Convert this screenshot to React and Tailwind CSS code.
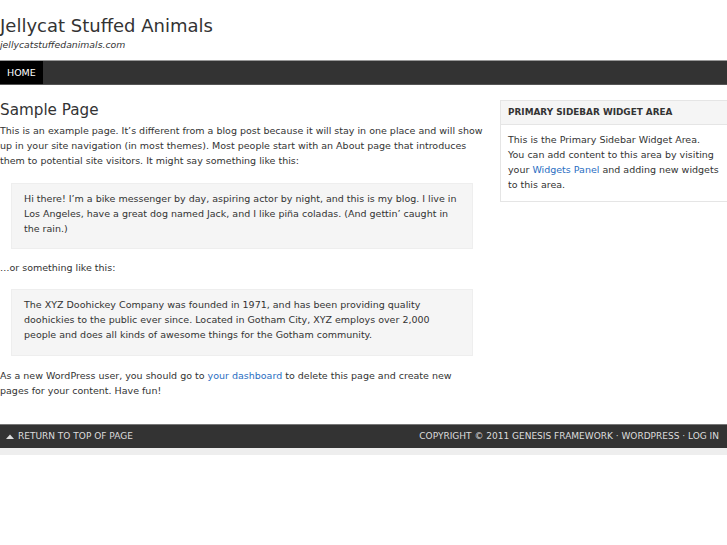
import React from "react";

const App = () => {
  return (
    <div className="min-h-[545px] bg-white text-[#333] font-['DejaVu_Sans',sans-serif]">
      <div className="w-[727px]">
        {/* Header */}
        <header className="h-[60px] pt-[14px]">
          <h1 className="text-[18px] leading-[24px] text-[#333]">Jellycat Stuffed Animals</h1>
          <p className="text-[9.3px] leading-[14px] italic text-[#333]">jellycatstuffedanimals.com</p>
        </header>

        {/* Nav */}
        <nav className="flex h-[25px] bg-[#333] border-t border-[#999] border-b border-b-[#555]">
          <a className="bg-black px-[7px] text-[9.5px] leading-[23px] text-white uppercase">Home</a>
        </nav>

        {/* Main */}
        <div className="flex pt-[15px]">
          <main className="w-[485px]">
            <h2 className="text-[15.2px] leading-[20px] mb-[3px]">Sample Page</h2>
            <p className="text-[9.5px] leading-[15px]">
              This is an example page. It’s different from a blog post because it will stay in one place and will show up in your site navigation (in most themes). Most people start with an About page that introduces them to potential site visitors. It might say something like this:
            </p>
            <blockquote className="mx-[11px] mt-[15px] mb-[11px] bg-[#f5f5f5] border border-[#eee] px-[12px] pt-[7px] pb-[12px] w-[462px]">
              <p className="text-[9.5px] leading-[15px]">
                Hi there! I’m a bike messenger by day, aspiring actor by night, and this is my blog. I live in Los Angeles, have a great dog named Jack, and I like piña coladas. (And gettin’ caught in the rain.)
              </p>
            </blockquote>
            <p className="text-[9.5px] leading-[15px]">…or something like this:</p>
            <blockquote className="mx-[11px] mt-[14px] mb-[12px] bg-[#f5f5f5] border border-[#eee] px-[12px] pt-[7px] pb-[13px] w-[462px]">
              <p className="text-[9.5px] leading-[15px]">
                The XYZ Doohickey Company was founded in 1971, and has been providing quality doohickies to the public ever since. Located in Gotham City, XYZ employs over 2,000 people and does all kinds of awesome things for the Gotham community.
              </p>
            </blockquote>
            <p className="text-[9.5px] leading-[15px]">
              As a new WordPress user, you should go to <a className="text-[#2a6ec2]">your dashboard</a> to delete this page and create new
              <br />
              pages for your content. Have fun!
            </p>
          </main>

          <aside className="ml-[15px] w-[227px]">
            <div className="border border-[#e5e5e5] border-r-0">
              <h4 className="bg-[#f5f5f5] border-b border-[#e5e5e5] px-[7px] text-[8.9px] leading-[23px] font-bold uppercase">
                Primary Sidebar Widget Area
              </h4>
              <p className="px-[7px] pt-[7px] pb-[9px] text-[9.5px] leading-[15px]">
                This is the Primary Sidebar Widget Area.
                <br />
                You can add content to this area by visiting
                <br />
                your <a className="text-[#2a6ec2]">Widgets Panel</a> and adding new widgets
                <br />
                to this area.
              </p>
            </div>
          </aside>
        </div>

        {/* Footer */}
        <footer className="mt-[26px] flex h-[24px] items-center justify-between bg-[#333] border-t border-[#777] px-[6px] text-[9px] uppercase text-[#ddd]">
          <span className="flex items-center gap-[4px]">
            <svg width="8" height="5" viewBox="0 0 8 5" className="mb-[1px]">
              <path d="M0 5 L4 0.5 L8 5 Z" fill="#ddd" />
            </svg>
            <span>Return to top of page</span>
          </span>
          <span className="pr-[2px]">Copyright © 2011 Genesis Framework · WordPress · Log in</span>
        </footer>
        <div className="h-[7px] bg-[#eee]" />
      </div>
    </div>
  );
};

export default App;
